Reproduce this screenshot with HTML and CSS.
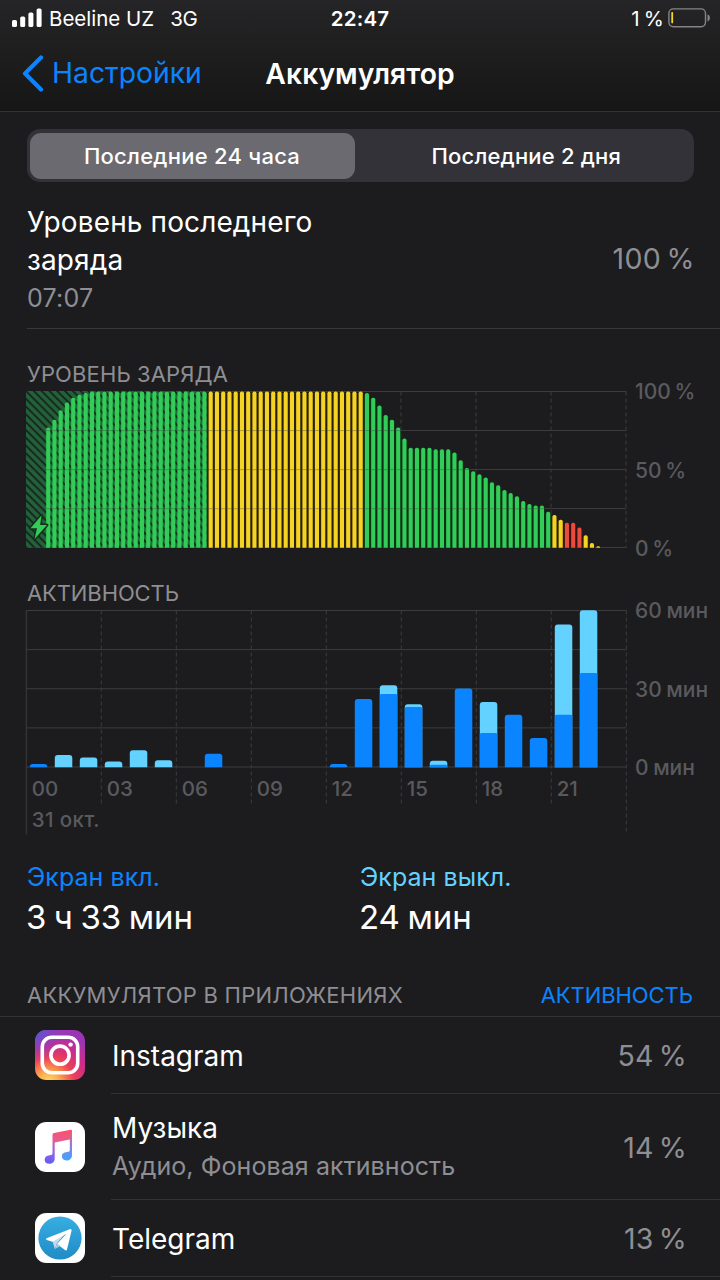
FILE: index.html
```html
<!DOCTYPE html>
<html lang="ru">
<head>
<meta charset="utf-8">
<title>Аккумулятор</title>
<link rel="stylesheet" href="styles.css">
</head>
<body>
<header class="header">
  <div class="status">
    <div class="status-left">
      <svg class="signal" width="30" height="19" viewBox="0 0 30 19" fill="#fff"><rect x="0" y="12" width="5" height="7" rx="1.6"/><rect x="8.2" y="8.6" width="5" height="10.4" rx="1.6"/><rect x="16.4" y="4.6" width="5" height="14.4" rx="1.6"/><rect x="24.6" y="0.4" width="5" height="18.6" rx="1.6"/></svg>
      <span class="carrier">Beeline UZ</span><span class="network">3G</span>
    </div>
    <span class="clock">22:47</span>
    <div class="status-right">
      <span class="charge">1 %</span>
      <svg width="43" height="20" viewBox="0 0 43 20"><rect x=".9" y=".9" width="36.6" height="17.8" rx="4.4" fill="none" stroke="#858587" stroke-width="1.4"/><rect x="3.3" y="4" width="1.8" height="11.4" rx=".8" fill="#f7d81f"/><path d="M39.5 6.2c3.2 1.6 3.2 5.8 0 7.4z" fill="#858587"/></svg>
    </div>
  </div>
  <nav class="nav">
    <a class="back"><svg width="22" height="37" viewBox="0 0 22 37"><path d="M19 2.5 3 18.5l16 16" fill="none" stroke="#0a84ff" stroke-width="4.2" stroke-linecap="round" stroke-linejoin="round"/></svg><span>Настройки</span></a>
    <h1 class="title">Аккумулятор</h1>
    <span></span>
  </nav>
</header>
<main>
  <div class="segments">
    <button class="segment selected">Последние 24 часа</button>
    <button class="segment second">Последние 2 дня</button>
  </div>
  <section class="last-charge">
    <div>
      <p class="label">Уровень последнего<br>заряда</p>
      <p class="time">07:07</p>
    </div>
    <span class="value">100 %</span>
  </section>
  <section class="chart-block">
    <h2 class="caption level-caption">УРОВЕНЬ ЗАРЯДА</h2>
    <div class="chart-row">
      <svg id="level" width="602" height="160" viewBox="25 390 602 160"></svg>
      <div class="scale"><span>100 %</span><span>50 %</span><span>0 %</span></div>
    </div>
  </section>
  <section class="chart-block activity">
    <h2 class="caption activity-caption">АКТИВНОСТЬ</h2>
    <div class="chart-row">
      <svg id="activity" width="602" height="227" viewBox="25 609 602 227"></svg>
      <div class="scale"><span>60 мин</span><span>30 мин</span><span>0 мин</span></div>
    </div>
  </section>
  <section class="totals">
    <div><p class="on">Экран вкл.</p><p class="total">3 ч 33 мин</p></div>
    <div><p class="off">Экран выкл.</p><p class="total">24 мин</p></div>
  </section>
  <div class="apps-head"><h2 class="caption apps-caption">АККУМУЛЯТОР В ПРИЛОЖЕНИЯХ</h2><a class="toggle">АКТИВНОСТЬ</a></div>
  <ul class="apps">
    <li class="app">
      <svg class="icon" viewBox="0 0 50 50">
        <defs>
          <radialGradient id="ig" cx=".27" cy="1.05" r="1.05"><stop offset="0" stop-color="#ffdc70"/><stop offset=".2" stop-color="#fcae4c"/><stop offset=".48" stop-color="#ee4154"/><stop offset=".72" stop-color="#d12b87"/><stop offset="1" stop-color="#9b35b5"/></radialGradient>
          <radialGradient id="ib" cx="0" cy="0" r=".7"><stop offset="0" stop-color="#4d5bd8"/><stop offset=".3" stop-color="#6550cf" stop-opacity=".8"/><stop offset="1" stop-color="#9b35b5" stop-opacity="0"/></radialGradient>
        </defs>
        <rect width="50" height="50" rx="11.3" fill="url(#ig)"/><rect width="50" height="50" rx="11.3" fill="url(#ib)"/>
        <g fill="none" stroke="#fff" stroke-width="3.6"><rect x="7.3" y="7.3" width="35.4" height="35.4" rx="9.5"/><circle cx="25" cy="25.2" r="9.1"/></g><circle cx="35.6" cy="14.6" r="2.2" fill="#fff"/>
      </svg>
      <div class="app-body"><div><p class="name">Instagram</p></div><span class="pct">54 %</span></div>
    </li>
    <li class="app tall">
      <svg class="icon" viewBox="0 0 50 50">
        <defs><linearGradient id="mu" x1=".65" y1="0" x2=".45" y2="1"><stop offset="0" stop-color="#fa5267"/><stop offset=".35" stop-color="#e65b93"/><stop offset=".72" stop-color="#8c65e8"/><stop offset="1" stop-color="#6b5cf2"/></linearGradient><linearGradient id="mb" x1="0" y1="0" x2="0" y2="1"><stop offset="0" stop-color="#ef5a7c"/><stop offset=".5" stop-color="#8d7fe0"/><stop offset="1" stop-color="#35a9ff"/></linearGradient></defs>
        <rect width="50" height="50" rx="11.3" fill="#fff"/>
        <path d="M17.500 12.800q0-1.500 1.500-1.800L35.500 7.800q1.500-.3 1.500 1.200v8L19.700 20.400V36.500c0 3.500-2.500 5.300-5.400 5.300-3 0-4.600-1.700-4.600-3.900 0-3 2.200-4.200 4.900-4.600 2.300-.3 2.900-.6 2.900-2.300z" fill="url(#mu)"/>
        <path d="M34.800 10H37v23c0 3.600-2.400 5.500-5.500 5.500-3 0-4.600-1.600-4.600-3.900 0-3 2.200-4.100 5.100-4.500 2.300-.3 2.800-.7 2.800-2.300z" fill="url(#mb)"/>
      </svg>
      <div class="app-body"><div><p class="name">Музыка</p><p class="detail">Аудио, Фоновая активность</p></div><span class="pct">14 %</span></div>
    </li>
    <li class="app">
      <svg class="icon" viewBox="0 0 50 50">
        <defs><linearGradient id="tg" x1="0" y1="0" x2="0" y2="1"><stop offset="0" stop-color="#37aee2"/><stop offset="1" stop-color="#218bc5"/></linearGradient></defs>
        <rect width="50" height="50" rx="11.3" fill="#fff"/><circle cx="25" cy="25" r="21.6" fill="url(#tg)"/>
        <path d="M17.500 28 30 21 22 30.200 19.800 36z" fill="#c8daea"/><path d="M11.500 25.300 34.700 16.200q2-.6 1.900 1.400L32 36.600q-.5 1.500-2 .4L22 30.900l9.500-10.100-14 8-5.700-1.800q-1.600-.8-.3-1.700z" fill="#fff"/><path d="M19.800 36l2.200-5.400 3.400 2.500z" fill="#a9c9dd"/>
      </svg>
      <div class="app-body"><div><p class="name">Telegram</p></div><span class="pct">13 %</span></div>
    </li>
  </ul>
</main>
<script src="charts.js"></script>
</body>
</html>
```
FILE: charts.js
```js
const X0 = 26.3, WIDTH = 600;
const rect = (x, y, w, h, fill, extra = '') =>
  `<rect x="${x}" y="${y}" width="${w}" height="${h}" fill="${fill}" ${extra}/>`;
const line = (x1, y1, x2, y2, extra = '') =>
  `<line x1="${x1}" y1="${y1}" x2="${x2}" y2="${y2}" stroke="#3c3c3e" stroke-width="1" ${extra}/>`;
const bar = (x, y, w, h, r, fill) => {
  r = Math.min(r, h);
  return `<path d="M${x} ${y + h}V${y + r}Q${x} ${y} ${x + r} ${y}H${x + w - r}Q${x + w} ${y} ${x + w} ${y + r}V${y + h}z" fill="${fill}"/>`;
};

function grid(top, bottom) {
  let s = '';
  for (let i = 0; i < 5; i++) {
    const y = top + (bottom - top) * i / 4;
    s += line(X0, y, X0 + WIDTH, y);
  }
  return s;
}

function drawLevel() {
  const top = 391.5, base = 547.8, slot = 6.25;
  const levels = [77, 82, 88, 93, 96, 98, 99]
    .concat(Array(44).fill(100))
    .concat([99, 96, 91, 85, 82, 77, 70, 64, 64, 64, 64, 63, 63, 63, 61, 56, 51, 49, 47, 45,
      42, 40, 37, 35, 33, 30, 28, 27, 27, 23, 21, 18, 16, 16, 13, 8, 3, 1]);
  const green = '#33cc58', yellow = '#f5d324', red = '#e94b3e';
  const tone = i => i < 29 ? green : i < 54 ? yellow : i < 84 ? green : i < 86 ? yellow : i < 89 ? red : yellow;
  const shade = { [green]: '#0b3316', [yellow]: '#2b2205', [red]: '#35120f' };
  let s = `<defs><pattern id="hatch" x="26" y="391" width="7.8" height="7.8" patternUnits="userSpaceOnUse"><path d="M-2-2L9.800 9.800M-2 5.800L2 9.800M5.800-2L9.800 2" stroke="#17201b" stroke-width="1.8"/></pattern></defs>`;
  for (let i = 1; i < 9; i++) {
    const x = Math.round(X0 + i * 75);
    s += line(x, top, x, base, 'stroke-dasharray="4 3"');
  }
  s += grid(top, base - .3);
  s += rect(26, 391, 181.2, base - 391, '#22623a');
  levels.forEach((v, k) => {
    const i = k + 3, h = v * 1.563, x = X0 + i * slot;
    const fill = i < 29 ? '#187534' : shade[tone(i)];
    const end = i === 28 ? 3 : 0;
    s += rect(x, base - h + 1, slot - end, h - 1, fill);
  });
  s += rect(26, 391, 181.2, base - 391, 'url(#hatch)');
  levels.forEach((v, k) => {
    const i = k + 3, h = v * 1.563;
    s += bar(X0 + i * slot + 1.1, base - h, 4.1, h, 1.8, tone(i));
  });
  for (let i = 1; i < 4; i++) {
    s += line(X0, top + 39.07 * i, X0 + WIDTH, top + 39.07 * i, 'opacity=".35"');
  }
  s += '<path d="M41.500 515.500L30.500 528.200H37L34.600 539L47 525H40.100z" fill="#33cc58" stroke="#12301b" stroke-width="3" paint-order="stroke" stroke-linejoin="round"/>';
  document.getElementById('level').innerHTML = s;
}

function drawActivity() {
  const top = 610.5, base = 767, hour = 25;
  const dark = '#0a84ff', light = '#64d2ff';
  /* hour, top of the stacked bar, top of the screen-on part */
  const rows = [[0, 764, 764], [1, 755, 767], [2, 757.5, 767], [3, 761.5, 767], [4, 750.3, 767],
    [5, 760.3, 767], [7, 753.7, 753.7], [12, 764, 764], [13, 699, 699], [14, 685.3, 694],
    [15, 704.3, 707], [16, 760.7, 764.7], [17, 688.5, 688.5], [18, 702, 733], [19, 714.7, 714.7],
    [20, 738, 738], [21, 624.5, 714.7], [22, 610.3, 673]];
  let s = grid(top, base);
  for (let i = 0; i < 9; i++) {
    const x = Math.round(X0 + i * 75) + .3;
    const bottom = i === 0 || i === 8 ? 834.5 : 806;
    s += line(x, top, x, bottom, i === 0 ? '' : 'stroke-dasharray="4 3"');
  }
  rows.forEach(([h, y, on]) => {
    const x = X0 + h * hour + 3.5;
    if (y < on) s += bar(x, y, 17.5, base + .3 - y, 3, light);
    if (on < base) s += bar(x, on, 17.5, base + .3 - on, on > y ? 1.5 : 3, dark);
  });
  for (let i = 0; i < 8; i++) {
    const label = String(i * 3).padStart(2, '0');
    s += `<text x="${X0 + i * 75 + 5.4}" y="795.5">${label}</text>`;
  }
  s += '<text class="date" x="31.8" y="827">31 окт.</text>';
  document.getElementById('activity').innerHTML = s;
}

drawLevel();
drawActivity();
```
FILE: styles.css
```css
* { box-sizing: border-box; }
body { margin: 0; width: 720px; height: 1280px; overflow: hidden; background: #1c1c1e; color: #fff; font-family: Inter, "Noto Sans", sans-serif; }
h1, h2, p, ul { margin: 0; padding: 0; font-weight: 400; list-style: none; }
span, p, h1, h2, a { white-space: nowrap; }
svg { display: block; flex: none; }
.header { height: 112px; border-bottom: 1px solid #323234; background: linear-gradient(#252527, #161616); }
.status { height: 36px; padding: 0 9px 0 12px; display: grid; grid-template-columns: 1fr auto 1fr; align-items: center; font-size: 20.5px; }
.status-left, .status-right { display: flex; align-items: center; }
.status-right { justify-content: flex-end; gap: 4px; }
.charge { word-spacing: -2px; letter-spacing: .2px; }
.signal { margin-right: 7px; margin-top: -1px; }
.network { margin-left: 16px; letter-spacing: -.3px; }
.clock { font-weight: 600; letter-spacing: .2px; margin-right: 3px; }
.nav { height: 75px; padding: 0 22px; display: grid; grid-template-columns: 1fr auto 1fr; align-items: center; }
.back { display: flex; align-items: center; gap: 8px; color: #0a84ff; font-size: 28.3px; }
.back span { margin-top: -2px; }
.title { font-size: 28.3px; font-weight: 600; letter-spacing: .05px; }
.segments { margin: 17px 26px 0 26.5px; height: 53px; padding: 3.5px 3px; border-radius: 13px; background: #323238; display: grid; grid-template-columns: 325px 1fr; }
.segment { border: 0; border-radius: 11px; padding: 0; background: none; color: #fff; font: 500 22px Inter, sans-serif; letter-spacing: .26px; }
.segment.selected { background: #6a6a70; }
.segment.second { padding-left: 7px; font-weight: 450; letter-spacing: .2px; }
.last-charge { margin-left: 27px; padding: 21px 26px 0 0; height: 147px; display: flex; justify-content: space-between; border-bottom: 1px solid #38383a; }
.label { font-size: 28px; line-height: 38px; letter-spacing: .12px; }
.time { font-size: 25px; line-height: 38px; color: #8e8e93; letter-spacing: .25px; }
.value { font-size: 28.500px; line-height: 38px; padding-top: 37px; color: #8e8e93; letter-spacing: .4px; word-spacing: -3px; margin-right: -1px; }
.chart-block { padding-left: 25px; height: 219px; padding-top: 32px; }
.activity { height: 291px; }
.caption { font-size: 22px; line-height: 26px; color: #8e8e93; padding-left: 2px; }
.level-caption { letter-spacing: .12px; }
.activity-caption { letter-spacing: -.1px; }
.apps-caption { letter-spacing: .25px; }
.chart-row { display: flex; gap: 8px; margin-top: 3px; }
.scale { height: 157px; margin-top: 2px; display: flex; flex-direction: column; justify-content: space-between; font-size: 21px; font-weight: 500; color: #5a5a5e; word-spacing: -2px; }
.scale span { line-height: 26px; margin: -13px 0; }
.activity .scale { word-spacing: -1px; }
#activity text { font-family: Inter, sans-serif; font-size: 20.5px; font-weight: 500; fill: #5a5a5e; }
#activity .date { letter-spacing: .4px; }
.totals { display: grid; grid-template-columns: 333px 1fr; padding: 19px 0 0 27px; height: 138px; }
.on, .off { font-size: 25px; line-height: 38px; color: #0a84ff; letter-spacing: .05px; }
.off { color: #64d2ff; }
.total { font-size: 33px; line-height: 42px; word-spacing: -1.800px; margin-left: -1px; }
.apps-head { display: flex; justify-content: space-between; align-items: flex-start; height: 40px; padding: 5px 27px 0 25px; border-bottom: 1px solid #323234; }
.toggle { color: #0a84ff; font-size: 22px; line-height: 26px; letter-spacing: -.05px; }
.app { display: flex; align-items: center; height: 77px; padding-left: 35px; gap: 26px; }
.app.tall { height: 106px; }
.icon { width: 50px; height: 50px; margin-top: -1px; }
.app-body { flex: 1; height: 100%; padding: 1px 33px 0 0; display: flex; align-items: center; justify-content: space-between; border-bottom: 1px solid #323234; }
.name { font-size: 28px; line-height: 38px; padding-left: 1px; }
.detail { font-size: 25px; line-height: 38px; color: #8e8e93; padding-left: 1px; letter-spacing: .08px; }
.pct { font-size: 28.5px; color: #8e8e93; word-spacing: -3px; letter-spacing: .2px; }
```
